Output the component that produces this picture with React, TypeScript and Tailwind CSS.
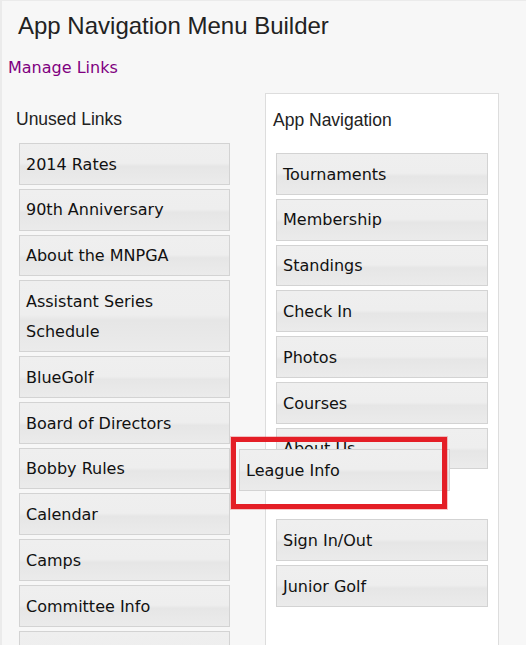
import React from "react";

const leftItems = [
  "2014 Rates",
  "90th Anniversary",
  "About the MNPGA",
  "Assistant Series Schedule",
  "BlueGolf",
  "Board of Directors",
  "Bobby Rules",
  "Calendar",
  "Camps",
  "Committee Info",
  "\u00a0",
];

const rightTop = ["Tournaments", "Membership", "Standings", "Check In", "Photos", "Courses", "About Us"];
const rightBottom = ["Sign In/Out", "Junior Golf"];

const itemCls =
  "border border-[#d3d3d3] bg-[linear-gradient(to_bottom,#efefef_0%,#eeeeee_48%,#e6e6e6_56%,#ebebeb_100%)] pl-[6px] pt-[5.6px] pb-[4.2px] leading-[30px] text-[16px] text-[#111] font-['DejaVu_Sans',sans-serif]";

function Item({ label }: { label: string }) {
  return <div className={itemCls}>{label}</div>;
}

export default function App() {
  return (
    <div className="relative h-[645px] w-[526px] overflow-hidden bg-[#f7f7f7] border-l-2 border-t border-[#ebebeb]">
      <h1 className="pl-[16px] pt-[10px] text-[24px] leading-[29px] text-[#222] font-['Liberation_Sans',Arial,sans-serif]">
        App Navigation Menu Builder
      </h1>
      <div className="mt-[16px] pl-[6px] text-[16px] leading-[24px] text-[#800080] font-['DejaVu_Sans',sans-serif]">
        Manage Links
      </div>
      <div className="flex mt-[13px]">
        <div className="w-[263px] shrink-0 pt-[14px]">
          <div className="pl-[14px] text-[17.5px] leading-[24px] text-[#222] font-['Liberation_Sans',Arial,sans-serif]">
            Unused Links
          </div>
          <div className="mt-[12px] ml-[17px] w-[211px] flex flex-col gap-[4px]">
            {leftItems.map((l, i) => (
              <Item key={i} label={l} />
            ))}
          </div>
        </div>
        <div className="w-[234px] shrink-0 h-[600px] bg-white border border-[#dddddd] pt-[14px]">
          <div className="pl-[7px] text-[17.5px] leading-[24px] text-[#222] font-['Liberation_Sans',Arial,sans-serif]">
            App Navigation
          </div>
          <div className="mt-[21px] ml-[10px] w-[212px] flex flex-col gap-[4px]">
            {rightTop.map((l) => (
              <Item key={l} label={l} />
            ))}
            <div className="h-[41.8px]" />
            {rightBottom.map((l) => (
              <Item key={l} label={l} />
            ))}
          </div>
        </div>
      </div>
      <div className="absolute left-[237px] top-[448px] w-[211px] z-10">
        <Item label="League Info" />
      </div>
      <div className="absolute left-[229px] top-[436px] w-[216px] h-[72px] border-[5px] border-[#e41e26] shadow-[0_0_0_1px_rgba(228,30,38,0.25)] z-20" />
    </div>
  );
}
